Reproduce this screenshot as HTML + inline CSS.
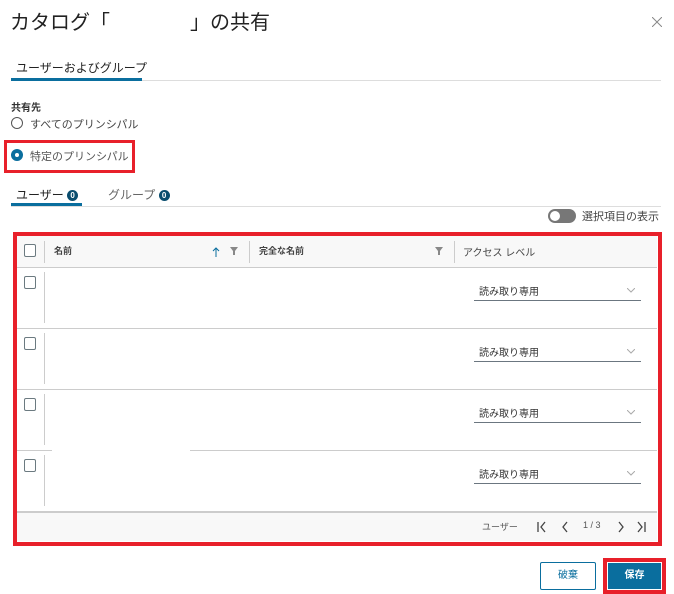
<!DOCTYPE html>
<html><head><meta charset="utf-8"><style>
*{box-sizing:border-box;margin:0;padding:0}
body{width:674px;height:594px;background:#fff;position:relative;overflow:hidden;font-family:"Liberation Sans","Noto Sans CJK JP",sans-serif;color:#333}
.a{position:absolute;white-space:nowrap}
.cb{position:absolute;width:12px;height:13px;border:1.5px solid #6b7a80;border-radius:2px;background:#fff}
.hl{position:absolute;height:1px;background:#ccc}
.vl{position:absolute;width:1px;background:#ccc}
.dd{position:absolute;left:474px;width:167px;height:22px;border-bottom:1.5px solid #6b7680;font-size:10px;color:#333;padding:4px 0 0 5px}
.dd svg{position:absolute;right:6px;top:9px}
.badge{display:inline-block;width:11px;height:11px;border-radius:50%;background:#0a4d6e;color:#fff;font-size:8px;line-height:11px;text-align:center;font-weight:bold;vertical-align:middle}
</style></head><body>
<div class="a" style="left:10px;top:6px;font-size:20px;color:#222">カタログ「　　　　」の共有</div>
<svg class="a" style="left:652px;top:17px" width="10" height="10"><path d="M0 0L10 10M10 0L0 10" stroke="#888" stroke-width="1"/></svg>
<div class="a" style="left:16px;top:59px;font-size:12px;color:#222">ユーザーおよびグループ</div>
<div class="hl" style="left:11px;top:80px;width:650px;background:#ddd"></div>
<div class="a" style="left:11px;top:78px;width:131px;height:3px;background:#0a6e9e"></div>
<div class="a" style="left:11px;top:99px;font-size:10px;font-weight:bold;color:#333">共有先</div>
<div class="a" style="left:11px;top:117px;width:12px;height:12px;border:1px solid #555;border-radius:50%"></div>
<div class="a" style="left:30px;top:116px;font-size:11px;color:#444">すべてのプリンシパル</div>
<div class="a" style="left:4px;top:140px;width:131px;height:33px;border:3px solid #e8202a"></div>
<div class="a" style="left:11px;top:149px;width:12px;height:12px;border-radius:50%;background:#0a6e9e"><div style="position:absolute;left:4px;top:4px;width:4px;height:4px;border-radius:50%;background:#fff"></div></div>
<div class="a" style="left:30px;top:148px;font-size:11px;color:#555">特定のプリンシパル</div>
<div class="a" style="left:16px;top:186px;font-size:12px;color:#222">ユーザー <span class="badge">0</span></div>
<div class="a" style="left:108px;top:186px;font-size:12px;color:#666">グループ <span class="badge">0</span></div>
<div class="hl" style="left:11px;top:206px;width:650px;background:#ddd"></div>
<div class="a" style="left:11px;top:203px;width:71px;height:3px;background:#0a6e9e"></div>
<div class="a" style="left:548px;top:209px;width:28px;height:14px;border-radius:7px;background:#777"><div style="position:absolute;left:2px;top:2px;width:10px;height:10px;border-radius:50%;background:#fff"></div></div>
<div class="a" style="left:582px;top:208px;font-size:11px;color:#444">選択項目の表示</div>
<div class="a" style="left:13px;top:232px;width:649px;height:314px;border:4px solid #e8202a"></div>
<div class="a" style="left:17px;top:236px;width:640px;height:31px;background:#f8f8f8"></div>
<div class="cb" style="left:24px;top:244px"></div>
<div class="vl" style="left:44px;top:241px;height:22px"></div>
<div class="vl" style="left:249px;top:241px;height:22px"></div>
<div class="vl" style="left:454px;top:241px;height:22px"></div>
<div class="a" style="left:54px;top:244px;font-size:9px;color:#444;font-weight:bold">名前</div>
<svg class="a" style="left:212px;top:247px" width="8" height="10"><path d="M4 1V10M1 4L4 1L7 4" stroke="#0a6e9e" stroke-width="1" fill="none"/></svg>
<svg class="a" style="left:230px;top:247px" width="8" height="8"><path d="M0 0H8L5 4V8H3V4Z" fill="#888"/></svg>
<div class="a" style="left:259px;top:244px;font-size:9px;color:#444;font-weight:bold">完全な名前</div>
<svg class="a" style="left:435px;top:247px" width="8" height="8"><path d="M0 0H8L5 4V8H3V4Z" fill="#888"/></svg>
<div class="a" style="left:463px;top:244px;font-size:10px;color:#444">アクセス レベル</div>
<div class="hl" style="left:17px;top:267px;width:640px"></div>
<div class="hl" style="left:17px;top:328px;width:640px"></div>
<div class="hl" style="left:17px;top:389px;width:640px"></div>
<div class="hl" style="left:17px;top:450px;width:35px"></div>
<div class="hl" style="left:190px;top:450px;width:467px"></div>
<div class="hl" style="left:17px;top:511px;width:640px;height:2px"></div>
<div class="cb" style="left:24px;top:276px"></div><div class="vl" style="left:44px;top:272px;height:51px"></div><div class="dd" style="top:279px">読み取り専用<svg width="8" height="5"><path d="M0 0L4 4L8 0" stroke="#aaa" fill="none"/></svg></div>
<div class="cb" style="left:24px;top:337px"></div><div class="vl" style="left:44px;top:333px;height:51px"></div><div class="dd" style="top:340px">読み取り専用<svg width="8" height="5"><path d="M0 0L4 4L8 0" stroke="#aaa" fill="none"/></svg></div>
<div class="cb" style="left:24px;top:398px"></div><div class="vl" style="left:44px;top:394px;height:51px"></div><div class="dd" style="top:401px">読み取り専用<svg width="8" height="5"><path d="M0 0L4 4L8 0" stroke="#aaa" fill="none"/></svg></div>
<div class="cb" style="left:24px;top:459px"></div><div class="vl" style="left:44px;top:455px;height:51px"></div><div class="dd" style="top:462px">読み取り専用<svg width="8" height="5"><path d="M0 0L4 4L8 0" stroke="#aaa" fill="none"/></svg></div>
<div class="a" style="left:17px;top:513px;width:640px;height:28px;background:#f8f8f8"></div>
<div class="a" style="left:482px;top:520px;font-size:9px;color:#555">ユーザー</div>
<svg class="a" style="left:537px;top:521px" width="110" height="12">
<path d="M1 1V11M8 1L4 6L8 11" stroke="#444" stroke-width="1.3" fill="none"/>
<path d="M30 1L26 6L30 11" stroke="#444" stroke-width="1.3" fill="none"/>
<path d="M82 1L86 6L82 11" stroke="#444" stroke-width="1.3" fill="none"/>
<path d="M101 1L105 6L101 11M108 1V11" stroke="#444" stroke-width="1.3" fill="none"/>
</svg>
<div class="a" style="left:583px;top:520px;font-size:9px;color:#555">1 / 3</div>
<div class="a" style="left:540px;top:562px;width:56px;height:28px;border:1px solid #0a6e9e;border-radius:2px;color:#0a6e9e;font-size:10px;text-align:center;line-height:26px">破棄</div>
<div class="a" style="left:603px;top:558px;width:63px;height:36px;border:4px solid #e8202a"></div>
<div class="a" style="left:608px;top:563px;width:53px;height:26px;background:#0a6e9e;color:#fff;font-size:10px;text-align:center;line-height:26px;font-weight:bold">保存</div>
</body></html>
